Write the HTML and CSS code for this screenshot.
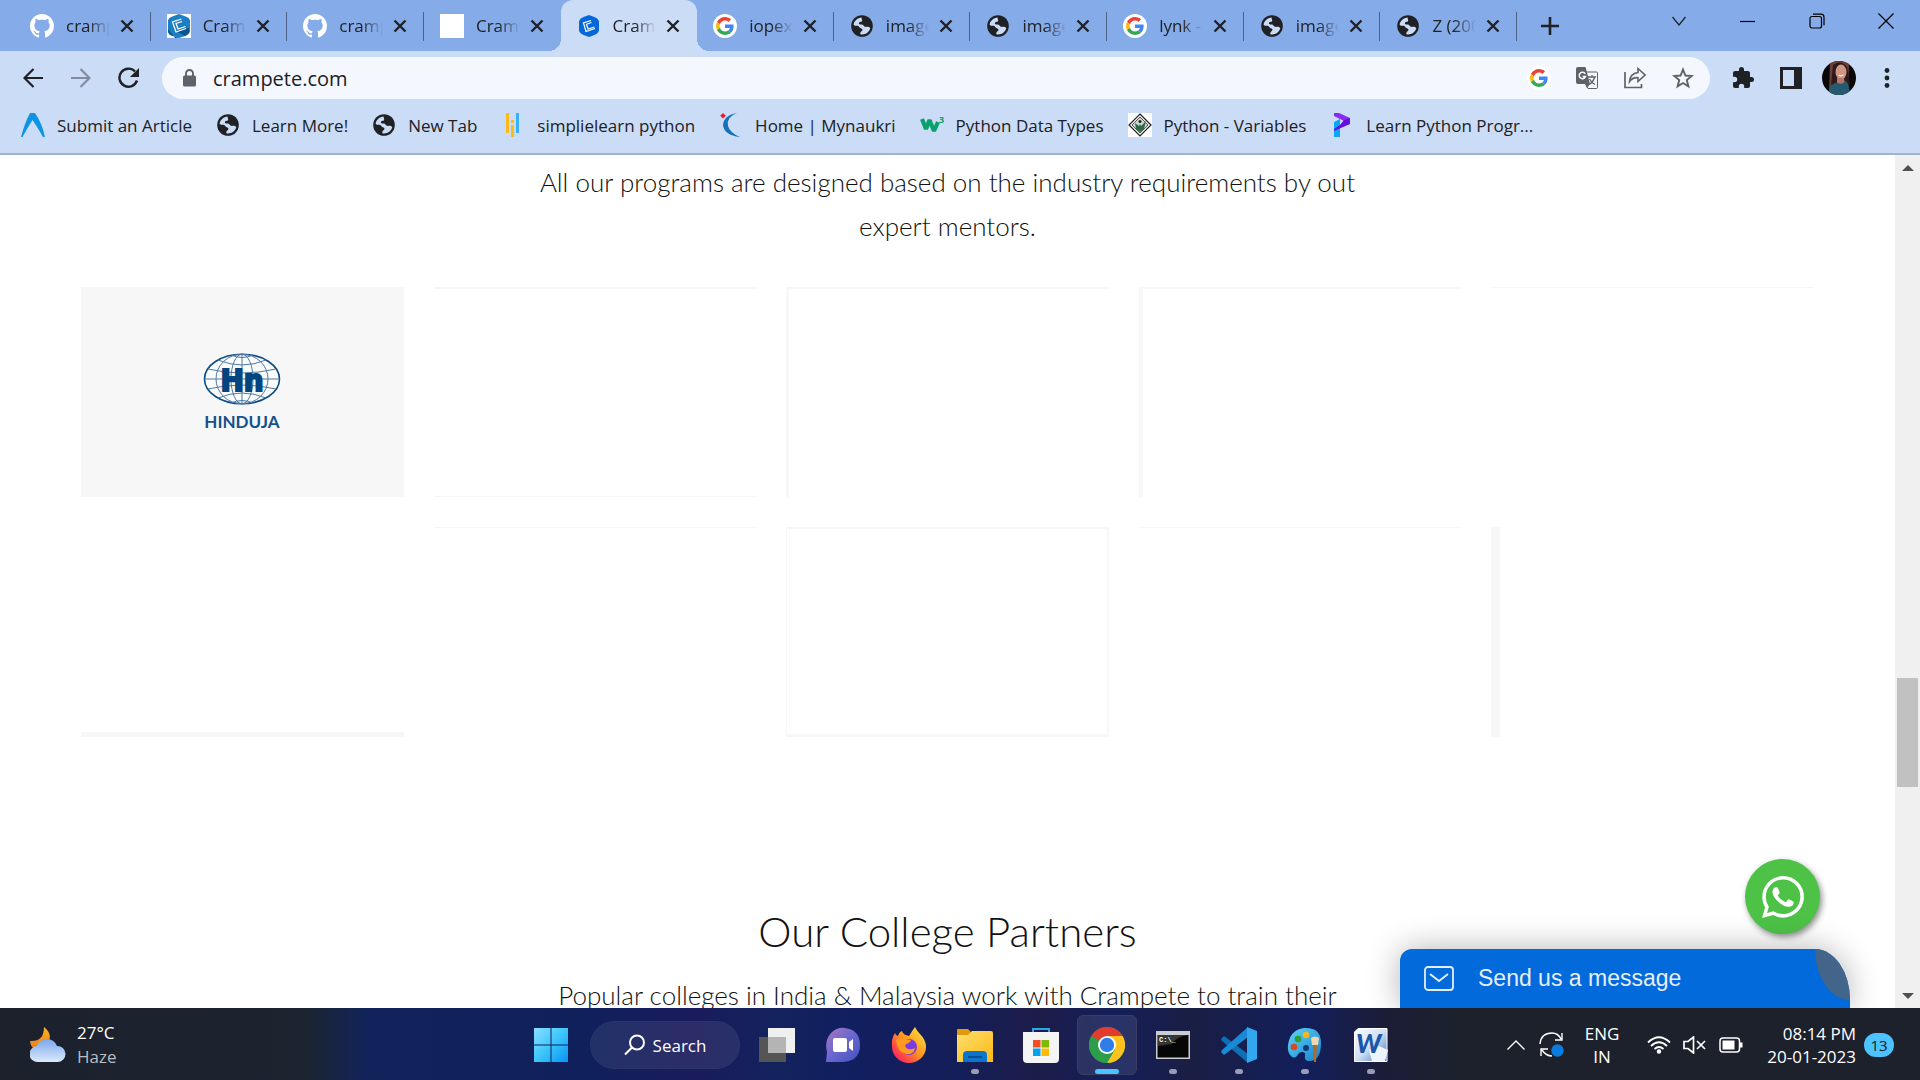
FILE: index.html
```html
<!DOCTYPE html>
<html lang="en">
<head>
<meta charset="utf-8">
<title>Crampete</title>
<link rel="stylesheet" href="styles.css">
</head>
<body>
<svg class="defs" aria-hidden="true">
  <defs>
    <linearGradient id="win" x1="0" y1="0" x2="1" y2="1"><stop offset="0" stop-color="#8be0ff"/><stop offset=".5" stop-color="#3cc6fb"/><stop offset="1" stop-color="#0693f5"/></linearGradient>
    <linearGradient id="cloud" x1="0" y1="0" x2="0" y2="1"><stop offset="0" stop-color="#7aa7ec"/><stop offset="1" stop-color="#dce9fb"/></linearGradient>
    <linearGradient id="moon" x1="0" y1="0" x2="0" y2="1"><stop offset="0" stop-color="#f8b62a"/><stop offset="1" stop-color="#f07b18"/></linearGradient>
    <linearGradient id="chat" x1="0" y1="0" x2="1" y2="1"><stop offset="0" stop-color="#a878c0"/><stop offset=".5" stop-color="#6a66cf"/><stop offset="1" stop-color="#4350c0"/></linearGradient>
    <linearGradient id="fox" x1="1" y1="0" x2="0" y2="1"><stop offset="0" stop-color="#fff14a"/><stop offset=".45" stop-color="#ff9a1e"/><stop offset=".8" stop-color="#ff3750"/><stop offset="1" stop-color="#e0206a"/></linearGradient>
    <linearGradient id="folder" x1="0" y1="0" x2="1" y2="1"><stop offset="0" stop-color="#ffdf70"/><stop offset="1" stop-color="#fbb916"/></linearGradient>
    <linearGradient id="palette" x1="0" y1="0" x2="1" y2="1"><stop offset="0" stop-color="#5fd4f5"/><stop offset="1" stop-color="#1583cf"/></linearGradient>
    <linearGradient id="word" x1="0" y1="0" x2="1" y2="1"><stop offset="0" stop-color="#ffffff"/><stop offset=".5" stop-color="#cfe0f6"/><stop offset="1" stop-color="#3c73bd"/></linearGradient>
    <symbol id="github" viewBox="0 0 16 16"><path fill="#fff" d="M8 0C3.58 0 0 3.58 0 8c0 3.54 2.29 6.53 5.47 7.59.4.07.55-.17.55-.38 0-.19-.01-.82-.01-1.49-2.01.37-2.53-.49-2.69-.94-.09-.23-.48-.94-.82-1.13-.28-.15-.68-.52-.01-.53.63-.01 1.08.58 1.23.82.72 1.21 1.87.87 2.33.66.07-.52.28-.87.51-1.07-1.78-.2-3.64-.89-3.64-3.95 0-.87.31-1.59.82-2.15-.08-.2-.36-1.02.08-2.12 0 0 .67-.21 2.2.82.64-.18 1.32-.27 2-.27s1.36.09 2 .27c1.53-1.04 2.2-.82 2.2-.82.44 1.1.16 1.92.08 2.12.51.56.82 1.27.82 2.15 0 3.07-1.87 3.75-3.65 3.95.29.25.54.73.54 1.48 0 1.07-.01 1.93-.01 2.2 0 .21.15.46.55.38A8.01 8.01 0 0 0 16 8c0-4.42-3.58-8-8-8z"/></symbol>
    <symbol id="globe" viewBox="0 0 24 24"><circle cx="12" cy="12" r="10.8" fill="#202124"/><path fill="#cbdcf6" d="M11.6 3.6c-4 .3-7.200 3.200-8 7 .5.900 1.300 1.300 2.600 1.200 1.400-.1 2.400.3 3.200 1.400.7 1 1.900.9 2.700 1.700.7.800.3 1.700-.6 2.300-.9.700-1.300 1.600-1.200 3 4.700.9 8.800-1.700 10-6-.8-1.200-2-1.700-3.400-1.400-1.700.3-2.800-.2-3.600-1.600-.5-.9-1.700-.8-3-.8-1.200 0-1.700-.8-1.300-1.700.4-.8 1.300-.8 2.200-.9 1.100-.2 1.200-1.100.8-2.100-.3-.8-.4-1.500-.4-2.100z"/></symbol>
    <symbol id="google" viewBox="0 0 48 48"><path fill="#EA4335" d="M24 9.5c3.540 0 6.710 1.220 9.210 3.600l6.850-6.850C35.900 2.380 30.470 0 24 0 14.620 0 6.510 5.380 2.560 13.220l7.980 6.190C12.430 13.720 17.740 9.500 24 9.500z"/><path fill="#4285F4" d="M46.980 24.550c0-1.570-.15-3.090-.38-4.550H24v9.020h12.940c-.58 2.960-2.260 5.480-4.780 7.180l7.730 6c4.510-4.180 7.090-10.360 7.090-17.650z"/><path fill="#FBBC05" d="M10.530 28.590c-.48-1.450-.76-2.990-.76-4.590s.27-3.140.76-4.590l-7.980-6.190C.92 16.460 0 20.120 0 24s.92 7.540 2.560 10.780z"/><path fill="#34A853" d="M24 48c6.480 0 11.930-2.130 15.890-5.810l-7.730-6c-2.150 1.450-4.920 2.300-8.160 2.300-6.260 0-11.570-4.220-13.470-9.910l-7.980 6.190C6.510 42.620 14.620 48 24 48z"/></symbol>
    <symbol id="gtab" viewBox="0 0 24 24"><circle cx="12" cy="12" r="12" fill="#fff"/><use href="#google" x="3" y="3" width="18" height="18"/></symbol>
    <symbol id="cram" viewBox="0 0 24 24"><path fill="#0468d8" d="M12 1l6 2.200q3 1 4 4v9.600q-1 3-4 4L12 23l-6-2.200q-3-1-4-4V7.200q1-3 4-4z"/><path fill="none" stroke="#fff" stroke-width="1.200" d="M14 6.500L6.500 9l2.500 8.500 9-3M14.500 8.500l-5 1.800 1.500 4.700 6.500-2"/></symbol>
    <symbol id="cramw" viewBox="0 0 24 24"><path fill="#fff" d="M0 0h24v24H0z"/><path fill="#1c7fc4" d="M12 0l6 2.200q4 1 5 4v11.600q-1 3-4 4L12 24l-7-2.200q-3-1-4-4V6.200q1-3 5-4z"/><path fill="#0c5590" d="M1 15l7 9 4 0-7-2.200q-4-1-4-5zM9 17l9 5 4-3v-5z"/><path fill="none" stroke="#fff" stroke-width="1.300" d="M14.500 5L5.500 8l3.500 10 10-3.500M15 7.500l-6 2 2 5.500 7.500-2.500"/></symbol>
    <symbol id="x" viewBox="0 0 14 14"><path d="M1.500 1.500l11 11M12.500 1.500l-11 11" stroke="#202124" stroke-width="2.400" fill="none"/></symbol>
  </defs>
</svg>

<header class="browser">
  <div class="tabstrip">
    <nav class="tabs" aria-label="Tabs">
      <div class="tab"><svg class="fav"><use href="#github"/></svg><a href="#" class="tab-title">crampete</a><button class="close" aria-label="Close"><svg><use href="#x"/></svg></button></div>
      <div class="tab"><svg class="fav"><use href="#cramw"/></svg><a href="#" class="tab-title">Crampete</a><button class="close" aria-label="Close"><svg><use href="#x"/></svg></button></div>
      <div class="tab"><svg class="fav"><use href="#github"/></svg><a href="#" class="tab-title">crampete</a><button class="close" aria-label="Close"><svg><use href="#x"/></svg></button></div>
      <div class="tab plain"><span class="fav blank"></span><a href="#" class="tab-title">Crampete</a><button class="close" aria-label="Close"><svg><use href="#x"/></svg></button></div>
      <div class="tab active"><svg class="fav"><use href="#cram"/></svg><a href="#" class="tab-title">Crampete</a><button class="close" aria-label="Close"><svg><use href="#x"/></svg></button></div>
      <div class="tab"><svg class="fav"><use href="#gtab"/></svg><a href="#" class="tab-title">iopex -</a><button class="close" aria-label="Close"><svg><use href="#x"/></svg></button></div>
      <div class="tab"><svg class="fav"><use href="#globe"/></svg><a href="#" class="tab-title">images</a><button class="close" aria-label="Close"><svg><use href="#x"/></svg></button></div>
      <div class="tab"><svg class="fav"><use href="#globe"/></svg><a href="#" class="tab-title">images</a><button class="close" aria-label="Close"><svg><use href="#x"/></svg></button></div>
      <div class="tab"><svg class="fav"><use href="#gtab"/></svg><a href="#" class="tab-title">lynk - G</a><button class="close" aria-label="Close"><svg><use href="#x"/></svg></button></div>
      <div class="tab"><svg class="fav"><use href="#globe"/></svg><a href="#" class="tab-title">images</a><button class="close" aria-label="Close"><svg><use href="#x"/></svg></button></div>
      <div class="tab"><svg class="fav"><use href="#globe"/></svg><a href="#" class="tab-title">Z (200</a><button class="close" aria-label="Close"><svg><use href="#x"/></svg></button></div>
    </nav>
    <button class="newtab" aria-label="New tab"><svg width="18" height="18" viewBox="0 0 18 18"><path d="M9 0v18M0 9h18" stroke="#202124" stroke-width="2.600"/></svg></button>
    <div class="wincontrols">
      <button aria-label="Search tabs"><svg width="16" height="16" viewBox="0 0 16 16"><path d="M1.500 4L8 12l6.500-8" fill="none" stroke="#202124" stroke-width="1.200"/></svg></button>
      <button aria-label="Minimize"><svg width="16" height="16" viewBox="0 0 16 16"><path d="M0 8.500h15" stroke="#000" stroke-width="1.200"/></svg></button>
      <button aria-label="Restore"><svg width="16" height="16" viewBox="0 0 16 16"><rect x="1" y="3.500" width="11.500" height="11.500" rx="2" fill="none" stroke="#000" stroke-width="1.200"/><path d="M4 1.200h8q3 0 3 3v8" fill="none" stroke="#000" stroke-width="1.200"/></svg></button>
      <button aria-label="Close window"><svg width="16" height="16" viewBox="0 0 16 16"><path d="M.5.5l15 15m0-15l-15 15" stroke="#000" stroke-width="1.200"/></svg></button>
    </div>
  </div>

  <div class="toolbar">
    <div class="group">
      <button class="tool" aria-label="Back"><svg width="20" height="20" viewBox="0 0 20 20"><path d="M20 10H2M10.500 1L1.500 10l9 9" fill="none" stroke="#202124" stroke-width="2.200"/></svg></button>
      <button class="tool" aria-label="Forward"><svg width="20" height="20" viewBox="0 0 20 20"><path d="M0 10h18M9.500 1l9 9-9 9" fill="none" stroke="#838c9d" stroke-width="2.200"/></svg></button>
      <button class="tool" aria-label="Reload"><svg width="22" height="22" viewBox="0 0 22 22"><path d="M19 13.500A9 9 0 1 1 17 4.500" fill="none" stroke="#202124" stroke-width="2.400"/><path d="M21 1v9h-9z" fill="#202124"/></svg></button>
    </div>
    <form class="omnibox">
      <span class="tool"><svg width="13" height="18" viewBox="0 0 13 18"><rect y="6.500" width="13" height="11" rx="1.500" fill="#5f6368"/><path d="M3 8V4.500a3.500 3.500 0 0 1 7 0V8" fill="none" stroke="#5f6368" stroke-width="1.900"/></svg></span>
      <input type="text" value="crampete.com" aria-label="Address">
      <button type="button" class="tool" aria-label="Google"><svg width="24" height="24"><use href="#gtab"/></svg></button>
      <button type="button" class="tool" aria-label="Translate"><svg width="22" height="22" viewBox="0 0 22 22"><path d="M10 5h10.500q1 0 1 1v14.500q0 1-1 1H12l-3-6" fill="none" stroke="#5f6368"/><path d="M0 2q0-2 2-2h7.500L14 17H2q-2 0-2-2zM9 17h5l-3 4z" fill="#5f6368"/><path d="M9.200 6.800A3.200 3.200 0 1 0 9.500 9.500H6.600" fill="none" stroke="#fff" stroke-width="1.500"/><path d="M12 10h8M16 8v2m2.500 0q-1 5-5.500 7.500M13.500 12q2 4 5.500 5.500" fill="none" stroke="#5f6368" stroke-width="1.300"/></svg></button>
      <button type="button" class="tool" aria-label="Share"><svg width="22" height="22" viewBox="0 0 22 22"><path d="M1 5v15.500h16.500V17" fill="none" stroke="#5f6368" stroke-width="1.700"/><path d="M14 1.500l7 6.500-7 6.500v-3.800q-5.500-.5-8.500 4 .5-8 8.500-9.200z" fill="none" stroke="#5f6368" stroke-width="1.600"/></svg></button>
      <button type="button" class="tool" aria-label="Bookmark"><svg width="22" height="22" viewBox="0 0 22 22"><path d="M11 2.500l2.400 6 6.300.5-4.900 4.100 1.600 6.300L11 16l-5.400 3.400 1.600-6.300L2.300 9l6.300-.5z" fill="none" stroke="#5f6368" stroke-width="1.900"/></svg></button>
    </form>
    <div class="group">
      <button class="tool" aria-label="Extensions"><svg width="24" height="24" viewBox="0 0 24 24"><path fill="#202124" d="M20.500 11H19V7c0-1.100-.9-2-2-2h-4V3.500a2.500 2.500 0 0 0-5 0V5H4c-1.100 0-2 .9-2 2v3.800h1.500a2.700 2.700 0 0 1 0 5.400H2V20c0 1.100.9 2 2 2h3.800v-1.500a2.700 2.700 0 0 1 5.400 0V22H17c1.100 0 2-.9 2-2v-4h1.500a2.500 2.500 0 0 0 0-5z"/></svg></button>
      <button class="tool" aria-label="Side panel"><svg width="22" height="22" viewBox="0 0 22 22"><path fill="#202124" fill-rule="evenodd" d="M0 0h22v22H0zM3 3v16h11V3z"/></svg></button>
      <button class="tool" aria-label="Profile"><svg width="34" height="34" viewBox="0 0 34 34"><clipPath id="av"><circle cx="17" cy="17" r="17"/></clipPath><g clip-path="url(#av)"><path fill="#0a0708" d="M0 0h34v34H0z"/><path fill="#6b4038" d="M8 0h19l-1 34H7z"/><path fill="#2d1a1c" d="M11 4q8-6 14 2l3 18H9z"/><ellipse cx="19" cy="11" rx="5.500" ry="7.500" fill="#cf9782"/><path fill="#b3766a" d="M15 17h7l1 6h-8z"/><path fill="#265a70" d="M7 27q5-6 9-5 4 2 8-2 4 4 4 15H7z"/><path d="M16.500 14q2.500 2 5 0" fill="none" stroke="#fff"/></g></svg></button>
      <button class="tool" aria-label="Menu"><svg width="6" height="20" viewBox="0 0 6 20"><g fill="#202124"><circle cx="3" cy="2.500" r="2.400"/><circle cx="3" cy="10" r="2.400"/><circle cx="3" cy="17.500" r="2.400"/></g></svg></button>
    </div>
  </div>

  <nav class="bookmarks" aria-label="Bookmarks">
    <a href="#"><svg viewBox="0 0 24 24"><path fill="#0d95e3" d="M9 0h5q7 10 10 24h-2Q17 15 11.500 7 7 14 1.500 24H0Q4 9 9 0z"/></svg>Submit an Article</a>
    <a href="#"><svg><use href="#globe"/></svg>Learn More!</a>
    <a href="#"><svg><use href="#globe"/></svg>New Tab</a>
    <a href="#"><svg viewBox="0 0 24 24"><path stroke="#fbbc1a" stroke-width="3" d="M6.500 0v20M11.500 12v12"/><circle cx="11.500" cy="8.500" r="1.700" fill="#fbbc1a"/><path stroke="#37b3f5" stroke-width="3" d="M16.500 0v20"/></svg>simplielearn python</a>
    <a href="#"><svg viewBox="0 0 24 24"><path fill="#1670ba" d="M18 0Q7 4 9 13q2 7 12 11Q5 22 4 12 5 2 18 0z"/><path fill="#ee1c25" d="M4 0l2.800 2.700L4 5.400 1.200 2.700z"/></svg>Home | Mynaukri</a>
    <a href="#"><svg viewBox="0 0 24 24"><path fill="none" stroke="#09a06b" stroke-width="4.200" stroke-linejoin="bevel" d="M2 6l4 10 3.500-9L14 18l4-9"/><text x="19" y="10" font-family="Open Sans" font-weight="700" font-size="9" fill="#09a06b">3</text></svg>Python Data Types</a>
    <a href="#"><svg viewBox="0 0 24 24"><path fill="#fff" d="M0 0h24v24H0z"/><path fill="#eef2ee" stroke="#222" stroke-width="1.200" d="M12 1l11 11-11 11L1 12z"/><path fill="#cfd8cf" stroke="#333" stroke-width=".8" d="M12 4l8 8-8 8-8-8z"/><path fill="#2d6a45" d="M7 10l4 3 1-2 1 2 5-5-2 8-4 3-4-3z"/><circle cx="12" cy="8.500" r="1.500" fill="#222"/></svg>Python - Variables</a>
    <a href="#"><svg viewBox="0 0 24 24"><path fill="#0fa5f5" d="M4 9l6-3v18H4z"/><path fill="#8a2bf2" d="M4 0h5l11 5v6L4 3z"/><path fill="#6410e0" d="M10 12l4-5 6-2v6L4 18v-2z"/></svg>Learn Python Progr...</a>
  </nav>
</header>

<main class="viewport">
  <div class="page">
    <section class="partners">
      <p class="lead">All our programs are designed based on the industry requirements by out<br>expert mentors.</p>
      <div class="cards">
        <div class="card filled">
          <svg width="78" height="78" viewBox="0 0 78 78" role="img" aria-label="Hinduja"><g fill="none" stroke="#4a7aa6" stroke-width="1"><ellipse cx="39" cy="26" rx="37.500" ry="24.800" fill="#fbfbfb" stroke="#0b4a83" stroke-width="1.600"/><ellipse cx="39" cy="26" rx="26" ry="24.800"/><ellipse cx="39" cy="26" rx="11" ry="24.800"/><path d="M39 1v50M1.500 26h75M5 16q34 8 68 0M5 36q34-8 68 0M15 7q24 10 48 0M15 45q24-10 48 0M28 2q11 5 22 0M28 50q11-5 22 0"/></g><text x="39" y="38" font-family="'Liberation Sans Narrow', 'DejaVu Sans Condensed', sans-serif" font-weight="700" font-size="31" text-anchor="middle" fill="#04457f" stroke="#04457f" stroke-width="2">Hn</text><text x="39" y="75" font-family="Lato" font-weight="700" font-size="17" text-anchor="middle" fill="#14508a">HINDUJA</text></svg>
        </div>
        <div class="card b"></div>
        <div class="card c"></div>
        <div class="card d"></div>
        <div class="card e"></div>
        <div class="card f"></div>
        <div class="card g"></div>
        <div class="card h"></div>
        <div class="card g"></div>
        <div class="card j"></div>
      </div>
    </section>
    <section class="colleges">
      <h2>Our College Partners</h2>
      <p class="lead">Popular colleges in India &amp; Malaysia work with Crampete to train their</p>
    </section>
    <a href="#" class="whatsapp" aria-label="WhatsApp"><svg width="42" height="42" viewBox="0 0 24 24"><path fill="#fff" d="M17.472 14.382c-.297-.149-1.758-.867-2.030-.967-.273-.099-.471-.148-.670.150-.197.297-.767.966-.940 1.164-.173.199-.347.223-.644.075-.297-.150-1.255-.463-2.390-1.475-.883-.788-1.480-1.761-1.653-2.059-.173-.297-.018-.458.130-.606.134-.133.298-.347.446-.520.149-.174.198-.298.298-.497.099-.198.050-.371-.025-.520-.075-.149-.669-1.612-.916-2.207-.242-.579-.487-.500-.669-.510-.173-.008-.371-.010-.570-.010-.198 0-.520.074-.792.372-.272.297-1.040 1.016-1.040 2.479 0 1.462 1.065 2.875 1.213 3.074.149.198 2.096 3.200 5.077 4.487.709.306 1.262.489 1.694.625.712.227 1.360.195 1.871.118.571-.085 1.758-.719 2.006-1.413.248-.694.248-1.289.173-1.413-.074-.124-.272-.198-.570-.347m-5.421 7.403h-.004a9.870 9.870 0 0 1-5.031-1.378l-.361-.214-3.741.982.998-3.648-.235-.374a9.860 9.860 0 0 1-1.510-5.260c.001-5.450 4.436-9.884 9.888-9.884 2.640 0 5.122 1.030 6.988 2.898a9.825 9.825 0 0 1 2.893 6.994c-.003 5.450-4.437 9.884-9.885 9.884m8.413-18.297A11.815 11.815 0 0 0 12.050 0C5.495 0 .160 5.335.157 11.892c0 2.096.547 4.142 1.588 5.945L.057 24l6.305-1.654a11.882 11.882 0 0 0 5.683 1.448h.005c6.554 0 11.890-5.335 11.893-11.893a11.821 11.821 0 0 0-3.480-8.413z"/></svg></a>
    <button class="message"><svg width="30" height="25" viewBox="0 0 30 25"><rect x="1" y="1" width="28" height="23" rx="3" fill="none" stroke="#e4eefa" stroke-width="1.800"/><path d="M6 8l9 7 9-7" fill="none" stroke="#e4eefa" stroke-width="2"/></svg>Send us a message<span class="lens"></span></button>
  </div>
  <div class="scrollbar">
    <svg width="12" height="6" viewBox="0 0 12 6"><path fill="#505050" d="M0 6l6-6 6 6z"/></svg>
    <div class="track"><div class="thumb"></div></div>
    <svg width="12" height="6" viewBox="0 0 12 6"><path fill="#505050" d="M0 0l6 6 6-6z"/></svg>
  </div>
</main>

<footer class="taskbar">
  <div class="weather">
    <svg width="36" height="36" viewBox="0 0 36 36"><path fill="url(#moon)" d="M14 0q10 8 3 17-6 6-14 4-3-3-3-7 14 1 14-14z"/><path fill="url(#cloud)" d="M8 35a8 8 0 0 1-1-16q3-7 10-7t10 7a8 8 0 0 1 1 16z"/></svg>
    <div><div>27°C</div><div class="dim">Haze</div></div>
  </div>
  <div class="apps">
    <button class="app" aria-label="Start"><svg width="36" height="36" viewBox="0 0 36 36"><path fill="url(#win)" d="M1 1h16.500v16.500H1zM18.500 1H35v16.500H18.500zM1 18.500h16.500V35H1zM18.500 18.500H35V35H18.500z"/></svg></button>
    <button class="search"><svg width="22" height="22" viewBox="0 0 22 22"><circle cx="13" cy="8.500" r="7" fill="none" stroke="#fff" stroke-width="2"/><path d="M8 13.500L1 20.500" stroke="#fff" stroke-width="2.200"/></svg>Search</button>
    <button class="app" aria-label="Task view"><svg width="36" height="36" viewBox="0 0 36 36"><path fill="#555" d="M0 10h27v25H0z"/><path fill="#f0f0f0" d="M9 1h27v25H9z"/><path fill="#b4b4b4" d="M9 10h18v16H9z"/></svg></button>
    <button class="app" aria-label="Chat"><svg width="36" height="36" viewBox="0 0 36 36"><path fill="url(#chat)" d="M1 35l1-10Q-1 14 6 6 12 0 20 1q15 2 15 17 0 16-17 17z"/><rect x="8" y="11" width="14" height="14" rx="2" fill="#fff"/><path fill="#fff" d="M24 15l4-3v12l-4-3z"/></svg></button>
    <button class="app" aria-label="Firefox"><svg width="36" height="36" viewBox="0 0 36 36"><path fill="url(#fox)" d="M24 0q2 4 5 7 6 6 6 13a17 16 0 0 1-34 0Q0 12 4 6q1 3 3 3 1-4 4-5 1 4 7 5 3-5 6-9z"/><circle cx="18" cy="20" r="8" fill="#7a3be0"/><path fill="#ff9a1e" d="M5 13q5-4 9-1l6 1q-1 3-5 4-2 3 2 5 4 1 7-1-1 7-9 6-9-2-10-14z"/></svg></button>
    <button class="app running" aria-label="File Explorer"><svg width="36" height="36" viewBox="0 0 36 36"><path fill="#e09a0c" d="M0 3q0-1 1-1h10l4 4v5H0z"/><path fill="url(#folder)" d="M0 8h11l4-4h19q2 0 2 2v29H0z"/><path fill="#0b74cc" d="M6 35V28q0-4 4-4h16q4 0 4 4v7z"/><path stroke="#074a8c" stroke-width="1.800" d="M11 30h14"/></svg></button>
    <button class="app" aria-label="Store"><svg width="36" height="36" viewBox="0 0 36 36"><path fill="none" stroke="#28a8ea" stroke-width="2" d="M10 6V2h16v4"/><path fill="#f4f4f4" d="M0 5h36v27q0 4-4 4H4q-4 0-4-4z"/><path fill="#f25022" d="M10 13h7.500v7.500H10z"/><path fill="#7fba00" d="M18.500 13H26v7.500h-7.500z"/><path fill="#00a4ef" d="M10 21.500h7.500V29H10z"/><path fill="#ffb900" d="M18.500 21.500H26V29h-7.500z"/></svg></button>
    <button class="app running current" aria-label="Chrome"><svg width="36" height="36" viewBox="0 0 36 36"><circle cx="18" cy="18" r="18" fill="#2c9e4b"/><path fill="#e33b2e" d="M18 18L2.400 9A18 18 0 0 1 33.600 9z"/><path fill="#fcc31e" d="M18 9h15.600A18 18 0 0 1 18 36l7.800-13.500z"/><path fill="#2c9e4b" d="M2.400 9A18 18 0 0 0 18 36l7.800-13.500L18 27l-7.800-4.500z"/><circle cx="18" cy="18" r="9" fill="#fff"/><circle cx="18" cy="18" r="7.200" fill="#2f7de9"/></svg></button>
    <button class="app running" aria-label="Command Prompt"><svg width="34" height="28" viewBox="0 0 34 28"><path fill="#c9cdd2" d="M0 0h34v28H0z"/><path fill="#060606" d="M1.500 4h31v22.500h-31z"/><path fill="#555" d="M2 4h30Q20 6 16 13L2 15z" opacity=".6"/><text x="3" y="11" font-family="Liberation Mono" font-weight="700" font-size="7" fill="#fff">C:\_</text></svg></button>
    <button class="app running" aria-label="Visual Studio Code"><svg width="36" height="36" viewBox="0 0 36 36"><path fill="#0f6fb4" d="M0 12l3-3 24 18v9L1 14z"/><path fill="#1b8ad6" d="M0 25l3 3L27 10V0L1 23z"/><path fill="#33a6f0" d="M26 0l10 4v28l-10 4z"/></svg></button>
    <button class="app running" aria-label="Paint"><svg width="36" height="36" viewBox="0 0 36 36"><path fill="url(#palette)" d="M17 1q17-1 17 15 0 18-12 18-5 0-4-5 1-4-3-4-3 0-5 4-3 3-6 0-4-4-3-11Q3 3 17 1z"/><circle cx="19" cy="8" r="3.300" fill="#f5b81c"/><circle cx="11" cy="12" r="3.300" fill="#2f9e2f"/><circle cx="7" cy="20" r="3.300" fill="#d9481f"/><circle cx="19" cy="21" r="3" fill="#123a7a"/><path fill="#b06a22" d="M26 17h4l-1 18h-2z"/><path fill="#f2d6b0" d="M24 11q4-3 8 0l-1 7h-6z"/></svg></button>
    <button class="app running" aria-label="Word"><svg width="34" height="34" viewBox="0 0 34 34"><path fill="url(#word)" stroke="#fff" d="M4 .5h29v33H.5V4z"/><path fill="#eef4fc" d="M15 22l10-4 9 4-3 11H18z"/><text x="2" y="25" font-family="Lato" font-weight="900" font-style="italic" font-size="26" fill="#1b57a8">W</text></svg></button>
  </div>
  <div class="tray">
    <svg width="18" height="10" viewBox="0 0 18 10"><path d="M.5 9.500L9 1l8.500 8.500" fill="none" stroke="#fff" stroke-width="1.400"/></svg>
    <svg class="sync" width="26" height="26" viewBox="0 0 26 26"><path d="M1 12Q2 1 13 1q6 0 9 6M23 1v7h-7M2 24v-7h7M3 18q4 6 10 6" fill="none" stroke="#fff" stroke-width="1.400"/><circle cx="18.500" cy="18.500" r="6.200" fill="#0a7be0"/></svg>
    <div class="lang">ENG<br>IN</div>
    <div class="status">
      <svg width="24" height="18" viewBox="0 0 24 18"><g fill="none" stroke="#fff" stroke-width="1.800"><path d="M1 6.500Q12-4 23 6.500M4 10q8-7.500 16 0M7.500 13q4.500-4 9 0"/></g><circle cx="12" cy="15.500" r="2.200" fill="#fff"/></svg>
      <svg width="24" height="18" viewBox="0 0 24 18"><path d="M1 5.500h4L10.500 1v16L5 12.500H1zM14 5l8 8m0-8l-8 8" fill="none" stroke="#fff" stroke-width="1.700"/></svg>
      <svg width="24" height="16" viewBox="0 0 24 16"><rect x="1" y="1" width="19.500" height="14" rx="3" fill="none" stroke="#fff" stroke-width="1.500"/><path fill="#fff" d="M3.500 3.500h12v9h-12zM21 5.500h2.500v5H21z"/></svg>
    </div>
    <div class="clock">08:14 PM<br>20-01-2023</div>
    <span class="badge">13</span>
  </div>
</footer>
</body>
</html>
```
FILE: styles.css
```css
* { box-sizing: border-box; }

body {
  margin: 0;
  height: 100vh;
  display: flex;
  flex-direction: column;
  overflow: hidden;
  background: #fff;
  color: #202124;
  font-family: "Open Sans", "Noto Sans", sans-serif;
  font-size: 17px;
}

button {
  padding: 0;
  border: 0;
  background: none;
  color: inherit;
  font: inherit;
  display: flex;
  align-items: center;
  justify-content: center;
}

a { color: inherit; text-decoration: none; }
svg { flex: none; display: block; }
.defs { position: absolute; width: 0; height: 0; }

/* Browser chrome */
.browser {
  flex: none;
  background: #cbdcf6;
  border-bottom: 2px solid #a1b3d1;
}

.tabstrip {
  height: 51px;
  display: flex;
  background: #85abe9;
}

.tabs {
  flex: 0 1 1517px;
  min-width: 0;
  display: flex;
  padding-left: 14px;
}

.tab {
  position: relative;
  flex: 1 1 0;
  min-width: 0;
  display: flex;
  align-items: center;
  padding: 0 17px 0 16px;
}

.tab::after {
  content: "";
  position: absolute;
  right: 0;
  top: 12px;
  width: 1px;
  height: 29px;
  background: #4d6285;
}

.tab.plain::after,
.tab.active::after { display: none; }

.tab.active {
  background: #cbdcf6;
  border-radius: 12px 12px 0 0;
}

/* Flared feet where the active tab meets the toolbar */
.tab.active::before {
  content: "";
  position: absolute;
  left: -12px;
  right: -12px;
  bottom: 0;
  height: 12px;
  background:
    radial-gradient(circle at 0 0, transparent 12px, #cbdcf6 12px) left / 12px 12px no-repeat,
    radial-gradient(circle at 100% 0, transparent 12px, #cbdcf6 12px) right / 12px 12px no-repeat;
}

.fav { width: 24px; height: 24px; flex: none; }
.fav.blank { background: #fff; }

.tab-title {
  flex: 1;
  min-width: 0;
  margin: 0 10px 0 12px;
  overflow: hidden;
  white-space: nowrap;
  mask-image: linear-gradient(90deg, #000 50%, transparent 100%);
}

.close svg { width: 14px; height: 14px; }

.newtab { width: 66px; }

.wincontrols {
  margin-left: auto;
  height: 42px;
  display: flex;
}
.wincontrols button { width: 69px; }

.toolbar {
  height: 54px;
  display: flex;
  align-items: center;
  gap: 9px;
  padding: 0 9px;
}

.group { display: flex; }

.tool {
  flex: none;
  width: 48px;
  height: 42px;
  display: flex;
  align-items: center;
  justify-content: center;
}

.omnibox {
  flex: 1;
  display: flex;
  align-items: center;
  height: 42px;
  padding: 0 3px;
  border-radius: 21px;
  background: #f4f7fd;
}

.omnibox input {
  flex: 1;
  min-width: 0;
  padding: 0;
  border: 0;
  outline: 0;
  background: none;
  color: #202124;
  font: 20px "Open Sans", "Noto Sans", sans-serif;
}

.bookmarks {
  height: 48px;
  display: flex;
  align-items: center;
  gap: 24px;
  padding: 0 21px 8px;
  white-space: nowrap;
}

.bookmarks a { display: flex; align-items: center; gap: 12px; }
.bookmarks svg { width: 24px; height: 24px; }

/* Web page */
.viewport {
  flex: 1;
  min-height: 0;
  display: flex;
}

.page {
  position: relative;
  flex: 1;
  overflow: hidden;
  padding: 5px 81px 0;
  font-family: Lato, sans-serif;
  font-weight: 300;
  text-align: center;
  color: #111;
}

.lead {
  margin: 0;
  font-size: 26px;
  line-height: 44px;
}

.cards {
  display: grid;
  grid-template-columns: repeat(5, 1fr);
  grid-auto-rows: 210px;
  gap: 30px;
  margin-top: 39px;
}

.card {
  border: 0 solid #f7f7f7;
  display: flex;
  align-items: center;
  justify-content: center;
}
.card.filled { background: #f7f7f7; }
.card.b { border-width: 2px 0 1px; }
.card.c { border-width: 2px 0 0 3px; }
.card.d { border-width: 2px 0 0 4px; }
.card.e { border-width: 1px 0 0; }
.card.f { border-width: 0 0 5px; }
.card.g { border-width: 1px 0 0; }
.card.h { border-width: 2px 2px 3px 1px; }
.card.j { border-width: 0 0 0 9px; }

.colleges { margin-top: 166px; }

.colleges h2 {
  margin: 0 0 14px;
  font-size: 42px;
  line-height: 56px;
  font-weight: 300;
}

.whatsapp {
  position: absolute;
  right: 75px;
  bottom: 74px;
  width: 75px;
  height: 75px;
  border-radius: 50%;
  background: #4dc247;
  box-shadow: 2px 3px 6px rgba(0, 0, 0, .45);
  display: flex;
  align-items: center;
  justify-content: center;
}

.message {
  position: absolute;
  right: 45px;
  bottom: 0;
  width: 450px;
  height: 59px;
  padding-left: 24px;
  gap: 24px;
  justify-content: flex-start;
  border-radius: 12px 35px 0 0 / 12px 51px 0 0;
  background: #026adb;
  box-shadow: 0 0 32px rgba(0, 0, 0, .3);
  color: #e6eef8;
  font: 23px "Liberation Sans", Arial, sans-serif;
}

.lens {
  position: absolute;
  right: 0;
  top: 0;
  width: 35px;
  height: 51px;
  border-radius: 0 35px 0 35px / 0 51px 0 51px;
  background: #44658a;
}

.scrollbar {
  position: relative;
  width: 25px;
  display: flex;
  flex-direction: column;
  align-items: center;
  padding: 10px 0 9px;
  background: #f0f0f0;
}

.track {
  flex: 1;
  display: grid;
  grid-template-rows: 508fr 109fr 206fr;
  width: 21px;
}
.thumb { grid-row: 2; background: #c1c1c1; }

/* Taskbar */
.taskbar {
  position: relative;
  flex: none;
  height: 72px;
  padding-top: 2px;
  display: grid;
  grid-template-columns: minmax(0, 1fr) auto minmax(0, 1fr);
  align-items: center;
  background: linear-gradient(90deg, #1c212c 0, #1b2430 16%, #12235a 19%, #10205c 31%, #1a1b5c 36%, #14225c 40%, #121f60 44%, #141e58 50%, #1d1c48 54%, #141f5a 58%, #1a1e44 62%, #121f5c 68%, #1b1d38 72%, #1c212c 76%);
  color: #fff;
}

.weather {
  display: flex;
  align-items: center;
  gap: 11px;
  padding-left: 30px;
  line-height: 24px;
}
.dim { color: #b9bdc4; }

.apps { display: flex; align-items: center; padding-left: 2px; }

.app {
  position: relative;
  width: 66px;
  height: 60px;
}

.running::after {
  content: "";
  position: absolute;
  bottom: 1px;
  left: 29px;
  width: 8px;
  height: 5px;
  border-radius: 3px;
  background: #9a9cb4;
}

.current::before {
  content: "";
  position: absolute;
  inset: 0 3px;
  border: 1px solid #3a3c62;
  border-radius: 6px;
  background: rgba(255, 255, 255, .09);
}
.current svg { position: relative; }
.current::after { left: 21px; width: 24px; background: #4cc2ff; }

.search {
  width: 150px;
  height: 48px;
  margin: 0 4px 0 6px;
  gap: 7px;
  border-radius: 24px;
  border: 1px solid #2c3468;
  background: rgba(255, 255, 255, .08);
}

.tray {
  display: flex;
  align-items: center;
  justify-content: flex-end;
  padding-right: 26px;
  line-height: 23px;
}

.sync { margin: 0 20px 0 14px; }
.lang { text-align: center; margin-right: 28px; }
.status { display: flex; align-items: center; gap: 12px; margin-right: 24px; }
.clock { text-align: right; margin-right: 8px; }

.badge {
  width: 30px;
  height: 24px;
  border-radius: 12px;
  background: #4cc2ff;
  color: #10202c;
  font-size: 15px;
  line-height: 24px;
  text-align: center;
}
```
